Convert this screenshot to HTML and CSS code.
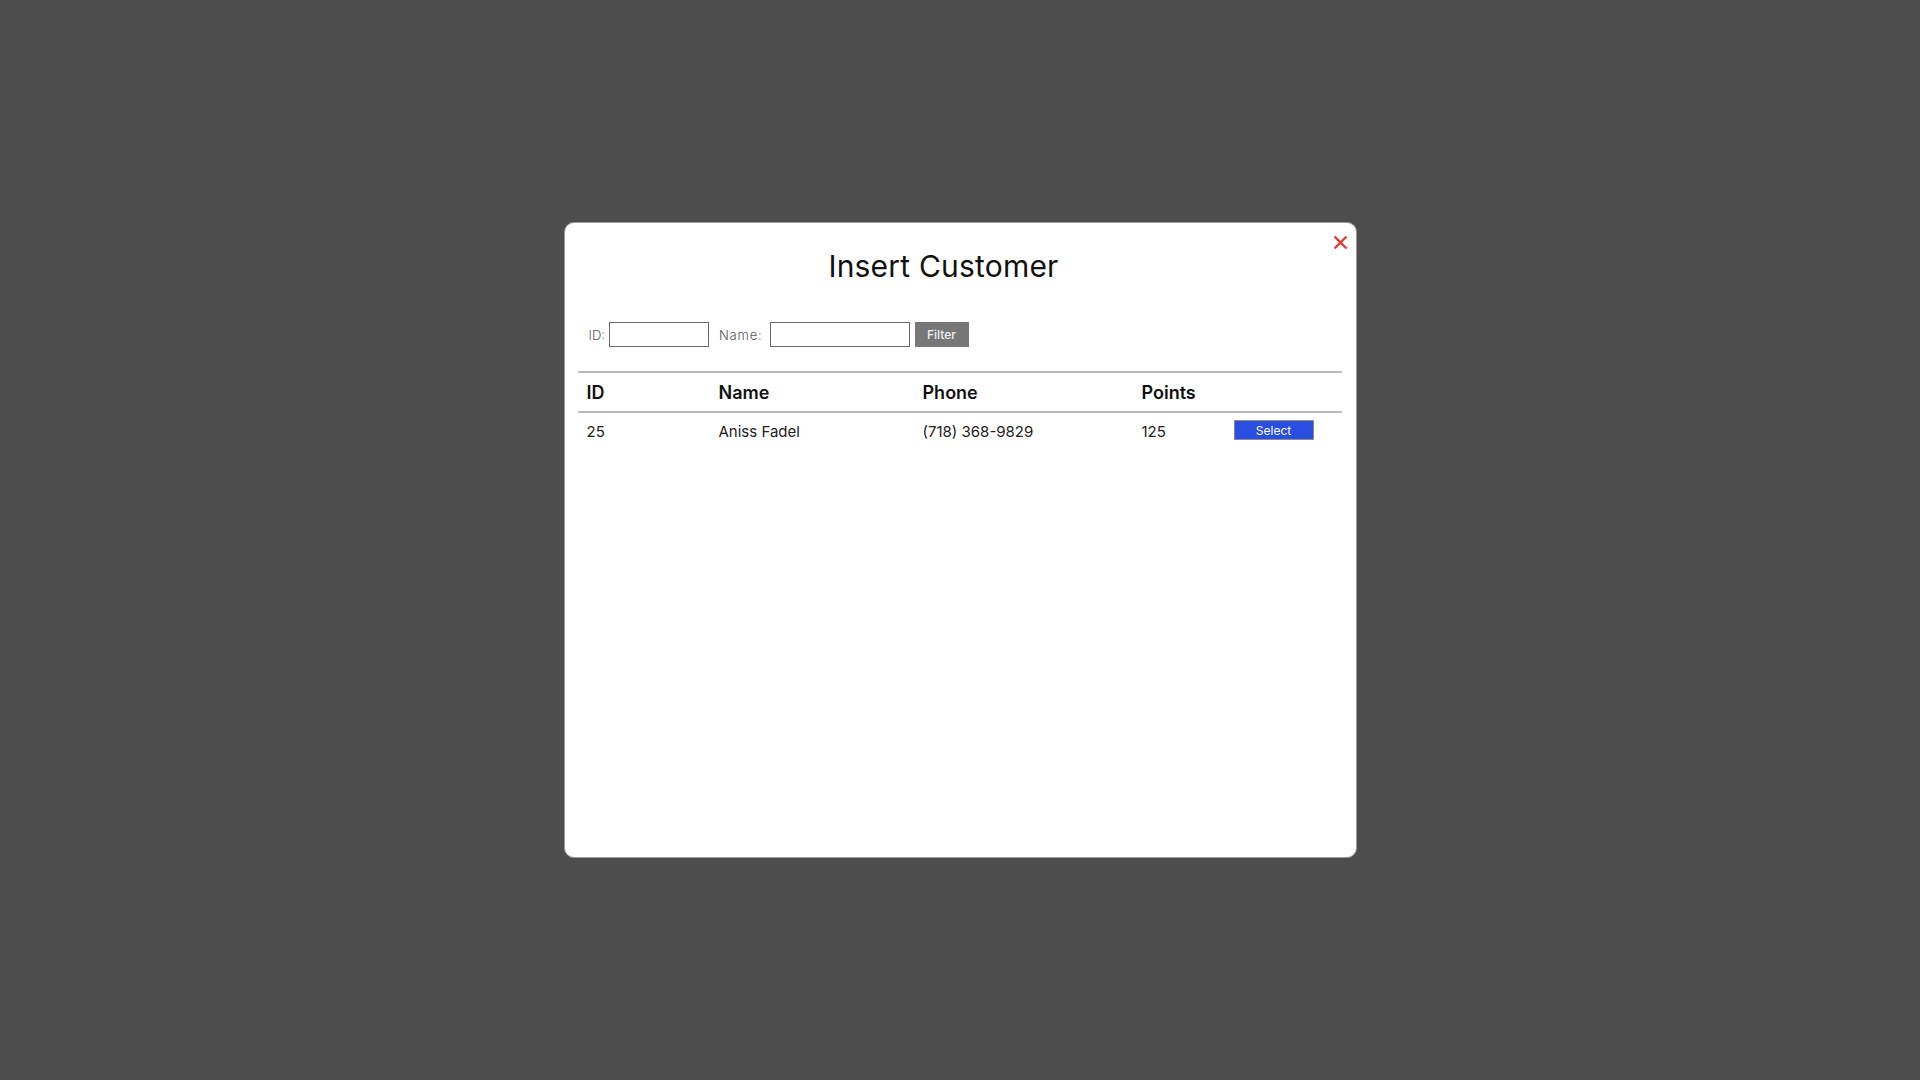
FILE: index.html
```html
<!DOCTYPE html>
<html lang="en">
<head>
<meta charset="utf-8">
<title>Insert Customer</title>
<link rel="stylesheet" href="styles.css">
</head>
<body>
<div class="overlay">
  <div class="modal">
    <button class="close" aria-label="Close">
      <svg width="15" height="15" viewBox="0 0 15 15"><path d="M1.5 1.5 L13.5 13.5 M13.5 1.5 L1.5 13.5" stroke="#e53935" stroke-width="2.4" stroke-linecap="butt"/></svg>
    </button>
    <h2 class="title">Insert Customer</h2>
    <div class="filter">
      <label class="lbl">ID:</label>
      <input class="inp inp-id" type="text">
      <label class="lbl lbl-name">Name:</label>
      <input class="inp inp-name" type="text">
      <button class="btn-filter">Filter</button>
    </div>
    <table class="grid">
      <colgroup>
        <col class="c-id"><col class="c-name"><col class="c-phone"><col class="c-points"><col class="c-act">
      </colgroup>
      <thead>
        <tr><th>ID</th><th>Name</th><th>Phone</th><th>Points</th><th></th></tr>
      </thead>
      <tbody>
        <tr><td>25</td><td>Aniss Fadel</td><td>(718) 368-9829</td><td>125</td><td><button class="btn-select">Select</button></td></tr>
      </tbody>
    </table>
  </div>
</div>
</body>
</html>
```
FILE: styles.css
```css
html, body {
  margin: 0;
  padding: 0;
  height: 100%;
}
body {
  background: #4d4d4d;
  font-family: "Inter", "Open Sans", sans-serif;
  color: #111;
}
.overlay {
  height: 100vh;
  display: flex;
  align-items: center;
  justify-content: center;
}
.modal {
  position: relative;
  box-sizing: border-box;
  width: 793px;
  height: 636px;
  background: #fff;
  border: 1px solid #9a9a9a;
  border-radius: 10px;
  padding: 0 14px 0 13px;
}
.close {
  position: absolute;
  top: 10px;
  right: 6px;
  width: 19px;
  height: 19px;
  padding: 2px;
  border: 0;
  background: transparent;
  cursor: pointer;
}
.close svg { display: block; }
.title {
  margin: 23px 0 0;
  padding-right: 32px;
  font-size: 30px;
  line-height: 40px;
  font-weight: 400;
  text-align: center;
  color: #111;
  letter-spacing: 0.2px;
}
.filter {
  display: flex;
  align-items: center;
  margin-top: 36px;
  padding-left: 11px;
  height: 25px;
}
.lbl {
  font-size: 13px;
  color: #555;
  font-weight: 300;
  margin-right: 4px;
}
.lbl-name {
  margin-left: 10px;
  margin-right: 7px;
  letter-spacing: 0.8px;
}
.inp {
  box-sizing: border-box;
  height: 25px;
  border: 1px solid #6b6b6b;
  padding: 0 4px;
  margin: 0;
  font-family: inherit;
}
.inp-id { width: 100px; }
.inp-name { width: 140px; }
.btn-filter {
  box-sizing: border-box;
  margin-left: 5px;
  width: 54px;
  height: 25px;
  border: 1px solid #777;
  background: #777;
  color: #f0f0f0;
  font-family: inherit;
  font-size: 12px;
  font-weight: 500;
  padding: 0;
}
.grid {
  margin-top: 24px;
  width: 764px;
  border-collapse: collapse;
  table-layout: fixed;
  border-top: 2px solid #b9b9b9;
}
.c-id { width: 132px; }
.c-name { width: 204px; }
.c-phone { width: 219px; }
.c-points { width: 92px; }
.c-act { width: 117px; }
.grid th {
  text-align: left;
  font-size: 18px;
  font-weight: 600;
  padding: 0 9px;
  height: 38px;
  border-bottom: 2px solid #b9b9b9;
  color: #111;
}
.grid td {
  font-size: 15px;
  line-height: 22px;
  font-weight: 400;
  vertical-align: top;
  padding: 8px 9px 4px;
  color: #222;
}
.btn-select {
  display: block;
  box-sizing: border-box;
  width: 80px;
  height: 20px;
  margin-top: -1px;
  border: 1px solid #8a8a8a;
  background: #2a4de2;
  color: #fff;
  font-family: inherit;
  font-size: 12px;
  padding: 0;
}
```
